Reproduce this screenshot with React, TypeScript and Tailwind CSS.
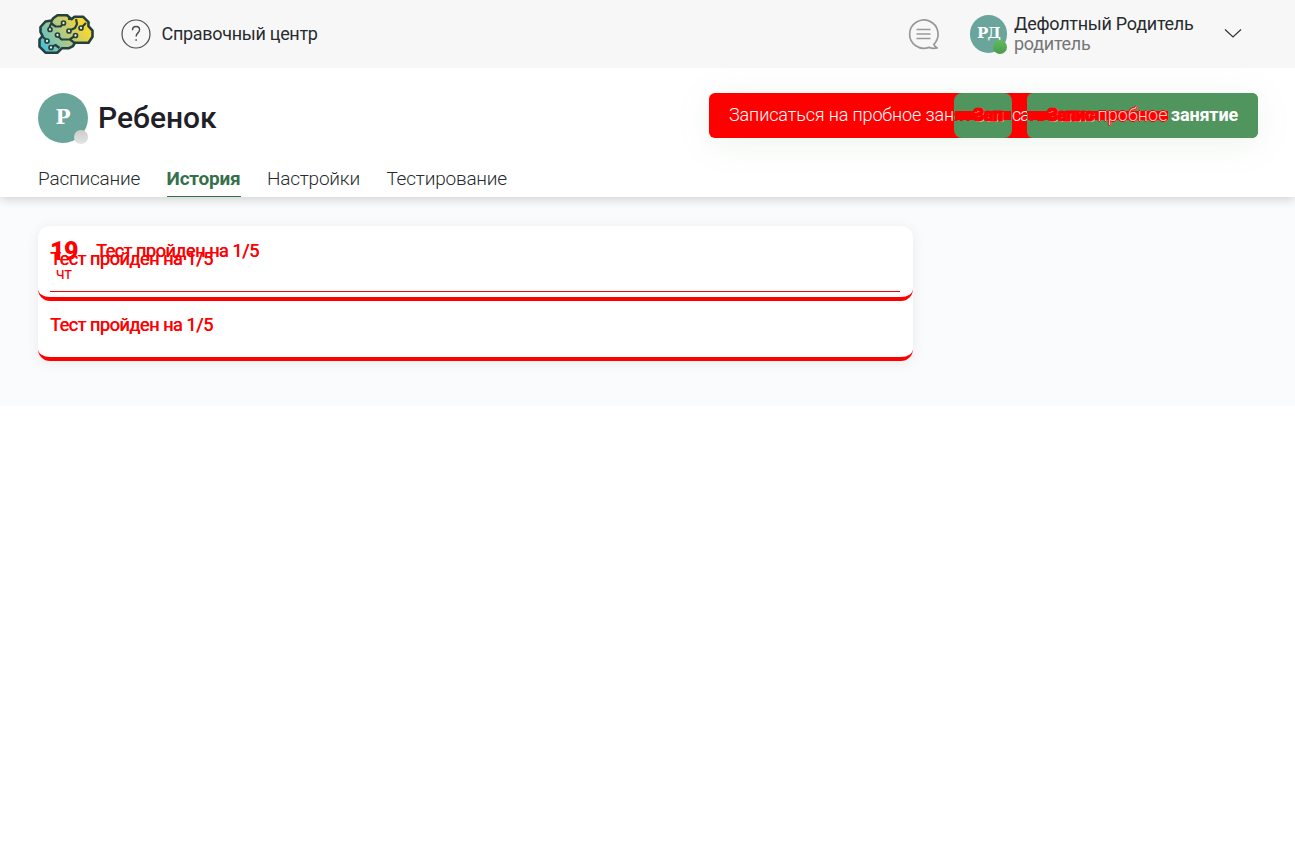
import React from "react";

function BrainLogo() {
  return (
    <svg className="block h-10 w-14" viewBox="0 0 56 40" fill="none">
      <defs>
        <linearGradient id="brain" x1="4" y1="36" x2="46" y2="8" gradientUnits="userSpaceOnUse">
          <stop offset="0" stopColor="#43bfdc" />
          <stop offset=".45" stopColor="#a5c891" />
          <stop offset=".95" stopColor="#f6d732" />
        </linearGradient>
      </defs>
      <path
        d="M19.500 1.200h9.500l4.500 4 3-2.500h8.500l5.500 5.500v4l4 4.500v6l-4 6H37l-2 3.500-4 2h-7l-4.500 4.500H7.500l-6-6V25.500L4.500 22 2.500 18v-5l5-5.500 6-1 2-2.500z"
        fill="url(#brain)"
        stroke="#24403f"
        strokeWidth="2.600"
        strokeLinejoin="round"
      />
      <g stroke="#24403f" strokeWidth="2.200" strokeLinejoin="round">
        <path d="M13.500 6.500v3l4 3h5l2-2M38 5l1 5-2 4-4.500 2M48 9l-3.500 3.500M33 5l-3 0M11.500 13l2-4M3.500 22l4.500 3.500M20.500 22.500l3 3h8l4.500-3M24 25.500h8l4 3v2M14.500 32.500l3-1.500 4 3" />
        <g fill="#e6ecd8" strokeWidth="1.700">
          <circle cx="25.500" cy="9" r="2" />
          <circle cx="31" cy="17" r="2" />
          <circle cx="43" cy="14" r="2" />
          <circle cx="12" cy="15.500" r="2" />
          <circle cx="19.500" cy="21" r="2" />
          <circle cx="37.500" cy="21.500" r="2" />
          <circle cx="9" cy="27" r="2" />
          <circle cx="13" cy="33.500" r="2" />
        </g>
      </g>
    </svg>
  );
}

function Header() {
  return (
    <header className="relative z-10 flex h-[68px] items-center bg-[#f7f7f7] pl-[38px] pr-[53px]">
      <BrainLogo />
      <svg className="ml-[27px] h-[30px] w-[30px]" viewBox="0 0 30 30" fill="none" stroke="#4b4b4b" strokeWidth="1.200">
        <circle cx="15" cy="15" r="14" />
        <path d="M11.500 11.200c0-2.300 1.500-3.700 3.600-3.700s3.500 1.300 3.500 3.300c0 3.200-3.500 3-3.500 6.700" strokeWidth="1.400" />
        <circle cx="15.100" cy="21" r=".5" fill="#4b4b4b" strokeWidth=".8" />
      </svg>
      <span className="ml-[10.500px] text-[18px] leading-5 tracking-[-0.3px]">Справочный центр</span>
      <svg className="ml-auto h-[31px] w-[31px]" viewBox="0 0 31 31" fill="none" stroke="#999" strokeWidth="1.700">
        <path d="M25.800 25.300a14.200 14.200 0 1 0-4.800 3.100c2.500 1 5.300 1.200 8.300.6-1.900-.8-3-1.800-3.500-3.700z" strokeLinejoin="round" />
        <path d="M8.500 10.500h14M8.500 15h14M8.500 19.500h14" />
      </svg>
      <div className="relative ml-[31px] flex h-[38px] w-[37px] items-center justify-center rounded-full bg-[#69a59a] pb-px text-[15px] font-bold tracking-[-0.8px] text-white [font-family:'DejaVu_Serif',serif]">
        РД
        <i className="absolute bottom-[-1px] right-0 h-[14px] w-[14px] rounded-full bg-linear-to-b from-[#5fbd58] to-[#4b9a52]" />
      </div>
      <div className="ml-[7px] w-[179px] whitespace-nowrap text-[18px] leading-5 tracking-[-0.27px]">
        <p>Дефолтный Родитель</p>
        <p className="text-[#757575]">родитель</p>
      </div>
      <svg className="ml-[31px] h-[12px] w-[18px]" viewBox="0 0 18 12" fill="none" stroke="#333" strokeWidth="1.200">
        <path d="M1 1.500l8 7.500 8-7.500" />
      </svg>
    </header>
  );
}

function TrialButtons() {
  return (
    <div className="flex h-[45px] w-[549px] whitespace-nowrap rounded-md bg-linear-to-r from-[#f00] from-60% to-[#50955d] to-60% text-[18px] leading-[43px] shadow-[0_5px_35px_rgba(80,149,93,0.1)]">
      <div className="w-[245px] overflow-hidden pl-5 tracking-[-0.12px] text-white">
        <span className="font-light">Записаться на пробное зан</span>
      </div>
      <div className="flex w-[58px] rounded-lg bg-[#50955d] bg-[linear-gradient(#f00,#f00)] bg-[length:56px_9px] bg-[position:1px_18px] bg-no-repeat font-black tracking-[-0.4px] text-[#f00]">
        <span className="w-[19px]">ят</span>
        <span className="[-webkit-text-stroke:1px_#f00] [text-shadow:1px_1px_0_rgba(255,255,255,0.6)]">Зап</span>
      </div>
      <div className="w-[15px] text-center font-light tracking-[-1px] text-white">са</div>
      <div className="flex w-[231px] justify-between rounded-md bg-[#50955d] bg-[linear-gradient(#f00,#f00)] bg-[length:140px_9px] bg-[position:1px_18px] bg-no-repeat pr-5 font-bold text-white">
        <div className="flex text-[#f00]">
          <span className="w-5 font-black">ть</span>
          <span className="font-black tracking-[-0.8px] [-webkit-text-stroke:1px_#f00] [text-shadow:1px_1px_0_rgba(255,255,255,0.6)]">Запис</span>
          <span className="ml-1 font-light tracking-[0.1px] text-[#ffd0c8] [text-shadow:1px_0_0_#f00,-1px_0_0_#f00,0_-1px_0_#f00,0_1px_0_#f00]">пробное</span>
        </div>
        <span className="tracking-[-0.15px]">занятие</span>
      </div>
    </div>
  );
}

function ProfileBar() {
  const tabs = ["Расписание", "История", "Настройки", "Тестирование"];
  return (
    <section className="relative h-[129px] bg-white pl-[38px] pr-[37px] pt-[25px] shadow-[0_2px_10px_rgba(0,0,0,0.18)]">
      <div className="flex h-[50px] items-start">
        <div className="relative flex h-[50px] w-[50px] items-center justify-center rounded-full bg-[#69a59a] pb-0.5 text-[20px] font-bold text-white [font-family:'DejaVu_Serif',serif]">
          Р
          <i className="absolute bottom-[-1px] right-0 h-[14px] w-[14px] rounded-full bg-linear-to-b from-[#ccc] to-[#e4e4e4]" />
        </div>
        <h1 className="ml-[10px] mr-auto text-[30px] font-medium leading-[50px] text-[#202026]">Ребенок</h1>
        <TrialButtons />
      </div>
      <nav className="mt-[25px] flex gap-[26.400px] text-[19px] font-light leading-[22px] tracking-[-0.2px]">
        {tabs.map((tab, i) => (
          <a key={tab} className={i === 1 ? "h-[29px] border-b border-[#36704a] font-bold text-[#36704a]" : "h-[29px]"}>
            {tab}
          </a>
        ))}
      </nav>
    </section>
  );
}

const result = "Тест пройден на 1/5";

function History() {
  return (
    <main className="h-[209px] bg-[#fafbfd] pl-[38px] pt-[29px] text-[18px] leading-5 tracking-[-0.42px] text-[#f00]">
      <div className="w-[875px] rounded-[12px] bg-white shadow-[0_2px_14px_rgba(0,0,0,0.07)]">
        <article className="relative h-[75px] rounded-b-[12px] border-b-4 border-[#f00] pl-3 pr-[13px]">
          <div className="flex h-[66px] gap-[18px] border-b border-[#f00] pt-[13px]">
            <div className="w-7">
              <strong className="block text-[25px] font-black leading-[26px]">19</strong>
              <small className="block pl-1.5 text-[16px] leading-[18px]">чт</small>
            </div>
            <span className="pt-0.5 [text-shadow:0.5px_0_#f00]">{result}</span>
          </div>
          <span className="absolute left-3 top-[23px] [text-shadow:0.5px_0_#f00]">{result}</span>
        </article>
        <article className="h-[60px] rounded-b-[12px] border-b-4 border-[#f00] px-3 pt-[14px] [text-shadow:0.5px_0_#f00]">
          {result}
        </article>
      </div>
    </main>
  );
}

export default function App() {
  return (
    <div className="min-h-[843px] bg-white font-['Roboto','Liberation_Sans',sans-serif] text-[#272b2f]">
      <Header />
      <ProfileBar />
      <History />
    </div>
  );
}
